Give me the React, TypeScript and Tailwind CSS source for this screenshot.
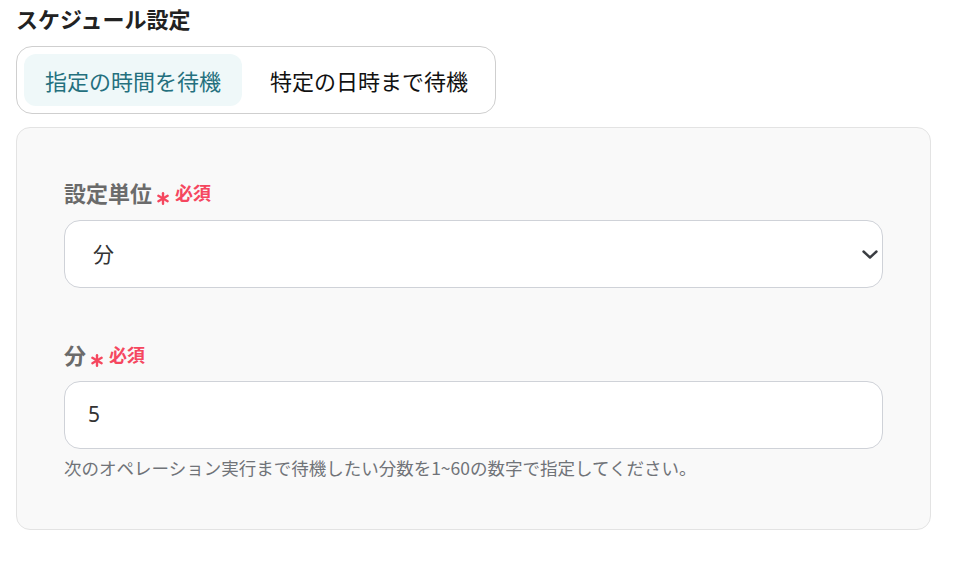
const font = "font-['Noto_Sans_CJK_JP','Noto_Sans',sans-serif]";

function Asterisk() {
  return (
    <svg width="12" height="13" viewBox="0 0 12 13" className="mt-[12px]">
      <g stroke="#f5475f" strokeWidth="2.4" strokeLinecap="round">
        <line x1="6" y1="1.2" x2="6" y2="11.8" />
        <line x1="1.4" y1="3.8" x2="10.6" y2="9.2" />
        <line x1="1.4" y1="9.2" x2="10.6" y2="3.8" />
      </g>
    </svg>
  );
}

function FieldLabel({ text, gap }: { text: string; gap: string }) {
  return (
    <div className={`flex items-center h-[34px] ${gap}`}>
      <span className="text-[22px] font-bold text-[#6b6b6b] leading-[30px]">{text}</span>
      <span className="ml-[5px]">
        <Asterisk />
      </span>
      <span className="ml-[6px] text-[18px] font-bold text-[#f5475f] leading-[30px]">必須</span>
    </div>
  );
}

export default function App() {
  return (
    <div className={`${font} w-[966px] h-[565px] bg-white px-4 pt-[3px]`}>
      <h2 className="text-[22px] font-bold text-[#222] leading-[30px]">スケジュール設定</h2>

      <div className="mt-[13px] inline-flex items-center gap-[12px] border border-[#cfcfcf] rounded-[16px] p-[7px] pr-[11px]">
        <button className="h-[52px] w-[218px] rounded-[12px] bg-[#eff8f9] text-[22px] text-[#24707e]">
          指定の時間を待機
        </button>
        <button className="h-[52px] px-[16px] text-[22px] text-[#111]">
          特定の日時まで待機
        </button>
      </div>

      <div className="mt-[13px] w-[915px] bg-[#f9f9f9] border border-[#e3e3e3] rounded-[14px] px-[47px] pt-[47px] pb-[48px]">
        <FieldLabel text="設定単位" gap="mb-[11px]" />
        <div className="relative h-[68px] w-[819px] bg-white border border-[#cfd2d8] rounded-[16px] flex items-center pl-[28px]">
          <span className="text-[21px] text-[#333]">分</span>
          <svg
            width="16"
            height="9"
            viewBox="0 0 16 9"
            className="absolute right-[4px] top-[29px]"
          >
            <polyline
              points="1.5,1.5 8,7.5 14.5,1.5"
              fill="none"
              stroke="#3a3d42"
              strokeWidth="2.4"
              strokeLinecap="round"
              strokeLinejoin="round"
            />
          </svg>
        </div>

        <div className="mt-[49px]">
          <FieldLabel text="分" gap="mb-[10px]" />
          <div className="h-[68px] w-[819px] bg-white border border-[#cfd2d8] rounded-[16px] flex items-center pl-[23px]">
            <span className="text-[21px] text-[#333] font-['Noto_Sans',sans-serif]">5</span>
          </div>
          <p className="mt-[6px] text-[17.5px] text-[#707378] leading-[26px]">
            次のオペレーション実行まで待機したい分数を1~60の数字で指定してください。
          </p>
        </div>
      </div>
    </div>
  );
}
